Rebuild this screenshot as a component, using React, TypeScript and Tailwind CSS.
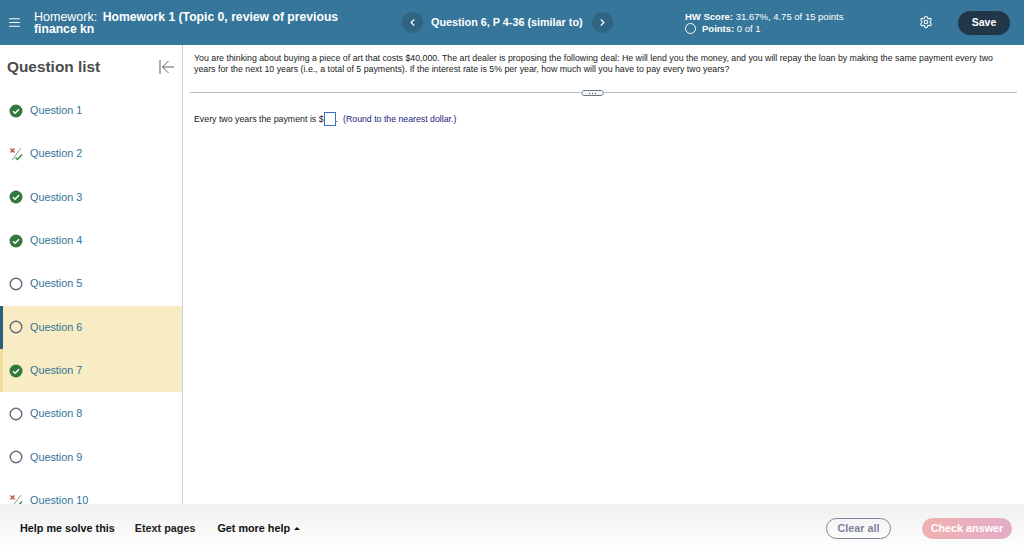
import { AlignJustify, ChevronLeft, ChevronRight, Settings } from 'lucide-react';

const questions = [
  { label: 'Question 1', status: 'done' },
  { label: 'Question 2', status: 'partial' },
  { label: 'Question 3', status: 'done' },
  { label: 'Question 4', status: 'done' },
  { label: 'Question 5', status: 'open' },
  { label: 'Question 6', status: 'open', current: true },
  { label: 'Question 7', status: 'done', marked: true },
  { label: 'Question 8', status: 'open' },
  { label: 'Question 9', status: 'open' },
  { label: 'Question 10', status: 'partial' },
];

function StatusIcon({ status }: { status: string }) {
  if (status === 'done') {
    return (
      <svg width="14" height="14" viewBox="0 0 14 14">
        <circle cx="7" cy="7" r="6.5" fill="#33783c" />
        <path d="M4 7.2l2.1 2.1L10 5.2" fill="none" stroke="#fff" strokeWidth="1.5" />
      </svg>
    );
  }
  if (status === 'open') {
    return (
      <svg width="14" height="14" viewBox="0 0 14 14">
        <circle cx="7" cy="7" r="5.8" fill="none" stroke="#646b7c" strokeWidth="1.4" />
      </svg>
    );
  }
  return (
    <svg width="14" height="14" viewBox="0 0 14 14">
      <path d="M12 1L3 13" stroke="#9a9a9a" strokeWidth="1" />
      <path d="M1.5 1.5l4 4M5.5 1.5l-4 4" stroke="#c8474b" strokeWidth="1.4" />
      <path d="M6.5 10.5l2 2L13 7.5" fill="none" stroke="#33883c" strokeWidth="1.4" />
    </svg>
  );
}

export default function App() {
  return (
    <div className="flex h-[551px] w-[1024px] flex-col overflow-hidden bg-white font-['Liberation_Sans',Arial,sans-serif]">
      {/* top bar */}
      <header className="flex h-[45px] shrink-0 items-center bg-[#36769a] text-white">
        <div className="flex w-[390px] items-center">
          <AlignJustify className="ml-[8px] h-[13px] w-[13px]" strokeWidth={2} />
          <div className="ml-[13px] w-[330px] text-[12.5px] leading-[12px]">
            Homework: <span className="ml-[2px] text-[12.2px] font-bold">Homework 1 (Topic 0, review of previous finance kn</span>
          </div>
        </div>
        <div className="ml-[12px] flex w-[211px] items-center">
          <button className="flex h-[21px] w-[21px] items-center justify-center rounded-full bg-[#2f6483]">
            <ChevronLeft className="h-[11px] w-[11px]" strokeWidth={2.5} />
          </button>
          <span className="ml-[8px] whitespace-nowrap text-[10.8px] font-bold">Question 6, P 4-36 (similar to)</span>
          <button className="ml-auto flex h-[21px] w-[21px] items-center justify-center rounded-full bg-[#2f6483]">
            <ChevronRight className="h-[11px] w-[11px]" strokeWidth={2.5} />
          </button>
        </div>
        <div className="ml-[72px] w-[200px] text-[9.5px] leading-[12px]">
          <div><span className="font-bold">HW Score:</span> 31.67%, 4.75 of 15 points</div>
          <div className="flex items-center">
            <span className="mr-[6px] h-[11px] w-[11px] rounded-full border border-white" />
            <span className="font-bold">Points:</span>&nbsp;0 of 1
          </div>
        </div>
        <Settings className="mb-[2px] ml-[34px] h-[14px] w-[14px]" strokeWidth={1.8} />
        <button className="ml-[25px] h-[24px] w-[52px] rounded-full bg-[#22364a] text-[10.5px] font-bold">Save</button>
      </header>

      <div className="flex min-h-0 flex-1">
        {/* question list */}
        <aside className="w-[183px] shrink-0 overflow-hidden border-r border-[#c5cfdd]">
          <div className="flex h-[44px] items-center justify-between pl-[7px] pr-[7px]">
            <h2 className="text-[15.4px] font-bold text-[#4c4c4c]">Question list</h2>
            <svg width="16" height="14" viewBox="0 0 16 14" fill="none" stroke="#5a5f6b" strokeWidth="1">
              <path d="M1 0v14M15 7H3.5M9.5 1L3.5 7l6 6" />
            </svg>
          </div>
          {questions.map(q => (
            <div
              key={q.label}
              className={`flex h-[43.33px] items-center gap-[7px] border-l-[3px] pl-[6px] text-[10.8px] leading-[15px] text-[#2f7397] ${
                q.current
                  ? 'border-[#2a6080] bg-[#f7ecc3]'
                  : q.marked
                    ? 'border-[#f3dd9b] bg-[#f7ecc3]'
                    : 'border-transparent'
              }`}
            >
              <StatusIcon status={q.status} />
              <span>{q.label}</span>
            </div>
          ))}
        </aside>

        {/* question body */}
        <main className="min-w-0 flex-1 text-[8.8px] text-[#222]">
          <div className="h-[47px] pl-[11px] pr-[20px] pt-[8px] leading-[11px]">
            You are thinking about buying a piece of art that costs $40,000. The art dealer is proposing the following deal: He will lend you the money, and you will repay the loan by making the same payment every two years for the next 10 years (i.e., a total of 5 payments). If the interest rate is 5% per year, how much will you have to pay every two years?
          </div>
          <div className="relative ml-[7px] mr-[7px] border-t border-[#b4bac8]">
            <span className="absolute left-[391px] top-[-3px] flex h-[6px] w-[23px] items-center justify-center gap-[2px] rounded-full border border-[#6a7488] bg-[#f4f5f7] outline outline-1 outline-white">
              <span className="h-[1px] w-[1px] bg-[#444]" />
              <span className="h-[1px] w-[1px] bg-[#444]" />
              <span className="h-[1px] w-[1px] bg-[#444]" />
            </span>
          </div>
          <div className="flex items-center px-[11px] pt-[19px] leading-[13px]">
            <span>Every two years the payment is $</span>
            <span className="h-[14px] w-[12px] border border-[#3f6fc4]" />
            <span>.</span>
            <span className="ml-[5px] text-[8.75px] text-[#1a237e]">(Round to the nearest dollar.)</span>
          </div>
        </main>
      </div>

      {/* bottom bar */}
      <footer className="flex h-[47px] shrink-0 items-center bg-gradient-to-b from-[#f0f0f0] to-white pt-[1px] text-[10.8px] font-bold">
        <span className="ml-[20px] text-[#111]">Help me solve this</span>
        <span className="ml-[20px] text-[#222]">Etext pages</span>
        <span className="ml-[22px] flex items-center text-[#111]">
          Get more help
          <span className="ml-[4px] h-0 w-0 border-x-[3px] border-b-[3px] border-x-transparent border-b-[#111]" />
        </span>
        <button className="ml-auto h-[21px] w-[65px] rounded-full border border-[#7d8496] text-[#7d8496]">Clear all</button>
        <button className="ml-[31px] mr-[12px] h-[21px] w-[90px] rounded-full bg-gradient-to-r from-[#eeb1b0] to-[#e4acc8] text-white">Check answer</button>
      </footer>
    </div>
  );
}
